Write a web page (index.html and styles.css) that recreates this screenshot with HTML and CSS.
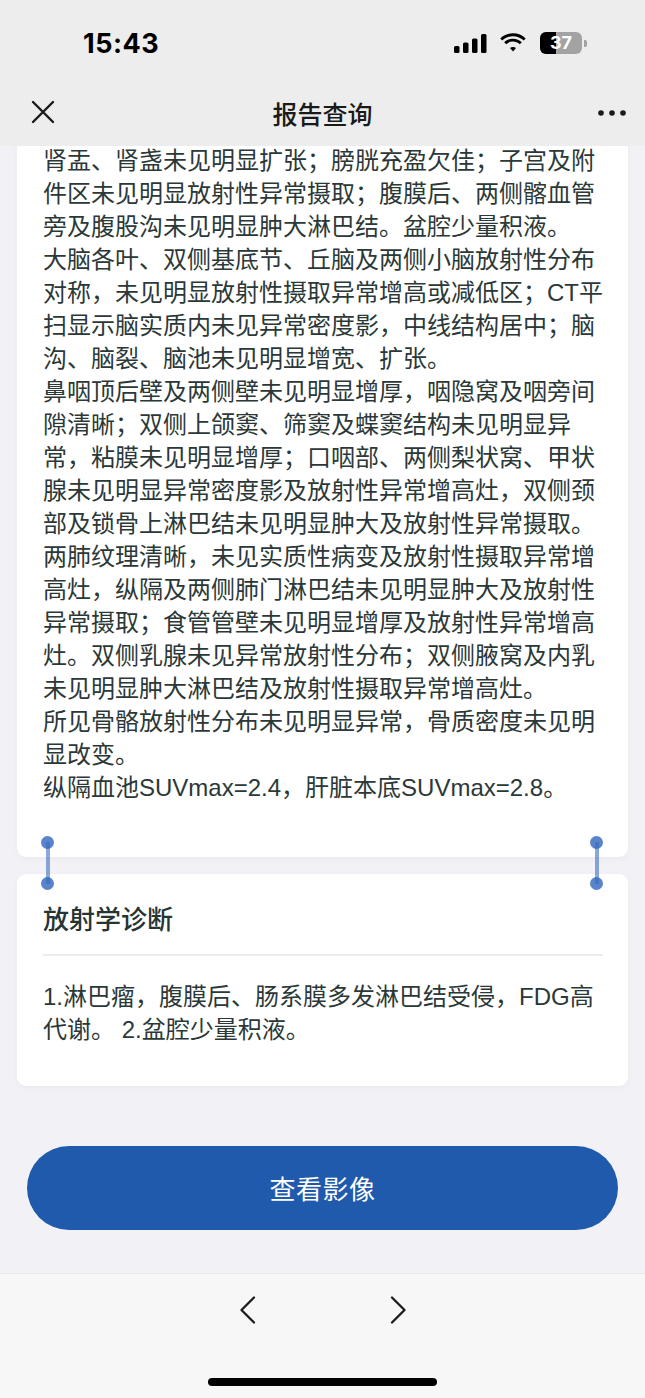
FILE: index.html
```html
<!DOCTYPE html>
<html lang="zh-CN">
<head>
<meta charset="utf-8">
<title>报告查询</title>
<link rel="stylesheet" href="styles.css">
</head>
<body>
<div class="phone">
  <header class="top">
    <div class="status">
      <span class="time">15:43</span>
      <div class="status-icons">
        <svg class="signal" width="34" height="20" viewBox="0 0 34 20">
          <rect x="0" y="12" width="5.5" height="7" rx="1.5"/>
          <rect x="9" y="8.5" width="5.5" height="10.5" rx="1.5"/>
          <rect x="18" y="4.5" width="5.5" height="14.5" rx="1.5"/>
          <rect x="27" y="0" width="5.5" height="19" rx="1.5"/>
        </svg>
        <svg class="wifi" width="26" height="20" viewBox="0 0 26 20">
          <path d="M13 3.2c4.1 0 7.9 1.6 10.7 4.3l2-2.1C22.4 2.2 17.9 0.3 13 0.3S3.6 2.2 0.3 5.4l2 2.1C5.1 4.8 8.9 3.2 13 3.2z"/>
          <path d="M13 8.6c2.6 0 5 1 6.8 2.7l2-2.1C19.5 7 16.4 5.7 13 5.7S6.5 7 4.2 9.2l2 2.1C8 9.6 10.4 8.6 13 8.6z"/>
          <path d="M13 13.9c1.2 0 2.2 0.4 3 1.2l-3 3.3-3-3.3c0.8-0.8 1.8-1.2 3-1.2z"/>
        </svg>
        <div class="battery">
          <div class="batt-body"><span class="batt-fill"></span><span class="batt-num">37</span></div>
          <span class="batt-cap"></span>
        </div>
      </div>
    </div>
    <div class="navbar">
      <svg class="nav-close" width="24" height="24" viewBox="0 0 24 24">
        <path d="M2 2L22 22M22 2L2 22" stroke="#1a1a1a" stroke-width="2.4" fill="none" stroke-linecap="round"/>
      </svg>
      <h1 class="nav-title">报告查询</h1>
      <svg class="nav-more" width="30" height="8" viewBox="0 0 30 8">
        <circle cx="4" cy="4" r="2.8"/><circle cx="15" cy="4" r="2.8"/><circle cx="26" cy="4" r="2.8"/>
      </svg>
    </div>
  </header>

  <main class="content">
    <section class="card card-findings">
      <p>肾盂、肾盏未见明显扩张；膀胱充盈欠佳；子宫及附件区未见明显放射性异常摄取；腹膜后、两侧髂血管旁及腹股沟未见明显肿大淋巴结。盆腔少量积液。</p>
      <p>大脑各叶、双侧基底节、丘脑及两侧小脑放射性分布对称，未见明显放射性摄取异常增高或减低区；CT平扫显示脑实质内未见异常密度影，中线结构居中；脑沟、脑裂、脑池未见明显增宽、扩张。</p>
      <p>鼻咽顶后壁及两侧壁未见明显增厚，咽隐窝及咽旁间隙清晰；双侧上颌窦、筛窦及蝶窦结构未见明显异常，粘膜未见明显增厚；口咽部、两侧梨状窝、甲状腺未见明显异常密度影及放射性异常增高灶，双侧颈部及锁骨上淋巴结未见明显肿大及放射性异常摄取。</p>
      <p>两肺纹理清晰，未见实质性病变及放射性摄取异常增高灶，纵隔及两侧肺门淋巴结未见明显肿大及放射性异常摄取；食管管壁未见明显增厚及放射性异常增高灶。双侧乳腺未见异常放射性分布；双侧腋窝及内乳未见明显肿大淋巴结及放射性摄取异常增高灶。</p>
      <p>所见骨骼放射性分布未见明显异常，骨质密度未见明显改变。</p>
      <p>纵隔血池SUVmax=2.4，肝脏本底SUVmax=2.8。</p>
    </section>

    <section class="card card-diagnosis">
      <h2 class="card-title">放射学诊断</h2>
      <p class="diag-text">1.淋巴瘤，腹膜后、肠系膜多发淋巴结受侵，FDG高代谢。 2.盆腔少量积液。</p>
    </section>

    <div class="action">
      <button class="btn-primary">查看影像</button>
    </div>

    <span class="sel-handle sel-left"></span>
    <span class="sel-handle sel-right"></span>
  </main>

  <footer class="toolbar">
    <div class="toolbar-nav">
      <svg width="18" height="28" viewBox="0 0 18 28"><path d="M15 1.5L2.5 14L15 26.5" stroke="#1c1c1c" stroke-width="2.3" fill="none" stroke-linecap="round" stroke-linejoin="round"/></svg>
      <svg width="18" height="28" viewBox="0 0 18 28"><path d="M3 1.5L15.5 14L3 26.5" stroke="#1c1c1c" stroke-width="2.3" fill="none" stroke-linecap="round" stroke-linejoin="round"/></svg>
    </div>
    <div class="home-indicator"></div>
  </footer>
</div>
</body>
</html>
```

FILE: styles.css
```css
* { box-sizing: border-box; }

html, body {
  margin: 0;
  padding: 0;
}

body {
  font-family: "Liberation Sans", "Noto Sans CJK SC", sans-serif;
  color: #2b3838;
  background: #f2f2f6;
}

.phone {
  width: 645px;
  height: 1398px;
  display: flex;
  flex-direction: column;
  overflow: hidden;
}

/* ---------- header ---------- */
.top {
  background: #ededed;
  flex: 0 0 146px;
  display: flex;
  flex-direction: column;
  position: relative;
  z-index: 2;
}

.status {
  height: 80px;
  display: flex;
  align-items: center;
  justify-content: space-between;
  padding: 6px 58px 0 83px;
}

.time {
  font-family: "Inter", "Liberation Sans", sans-serif;
  font-weight: 700;
  font-size: 27px;
  letter-spacing: 0.5px;
  color: #000;
}

.status-icons {
  display: flex;
  align-items: center;
  gap: 12px;
}

.signal, .wifi { fill: #000; }
.signal { margin-top: 1px; }

.battery {
  display: flex;
  align-items: center;
  gap: 2px;
  margin-left: 2px;
}

.batt-body {
  position: relative;
  width: 42px;
  height: 22px;
  border-radius: 6px;
  background: #a3a3a3;
  overflow: hidden;
}

.batt-fill {
  position: absolute;
  left: 0; top: 0; bottom: 0;
  width: 37%;
  background: #000;
}

.batt-num {
  position: relative;
  display: block;
  text-align: center;
  font-family: "Inter", "Liberation Sans", sans-serif;
  font-weight: 700;
  font-size: 18px;
  line-height: 22px;
  color: #fff;
}

.batt-cap {
  width: 3px;
  height: 7px;
  border-radius: 0 2px 2px 0;
  background: #a3a3a3;
}

.navbar {
  flex: 1;
  display: flex;
  align-items: center;
  justify-content: space-between;
  padding: 0 16px 0 31px;
  position: relative;
}

.nav-close { display: block; margin-top: -2px; }

.nav-title {
  position: absolute;
  left: 0; right: 0;
  margin: 0;
  text-align: center;
  font-family: "Noto Sans CJK SC", sans-serif;
  font-size: 25px;
  font-weight: 500;
  color: #1a1a1a;
  pointer-events: none;
}

.nav-more { fill: #1a1a1a; margin-right: 2px; }

/* ---------- content ---------- */
.content {
  flex: 1;
  position: relative;
  overflow: hidden;
  background: #f2f2f6;
  padding: 0 17px;
}

.card {
  background: #fff;
  border-radius: 9px;
  box-shadow: 0 2px 6px rgba(0, 0, 0, 0.035);
}

.card p {
  margin: 0;
  font-size: 24px;
  line-height: 33px;
}

.card-findings {
  border-radius: 0 0 9px 9px;
  margin-top: -2px;
  padding: 0 24px 53px 26px;
}

.card-diagnosis {
  margin-top: 17px;
  padding: 27px 24px 40px 26px;
}

.card-title {
  margin: 0;
  font-family: "Noto Sans CJK SC", sans-serif;
  font-size: 26px;
  line-height: 34px;
  font-weight: 500;
  color: #263434;
  padding-bottom: 19px;
  border-bottom: 2px solid #ececec;
  margin-right: 1px;
}

.diag-text {
  padding-top: 24px;
}

.action {
  padding: 60px 10px 0;
}

.btn-primary {
  display: block;
  width: 100%;
  height: 84px;
  border: none;
  border-radius: 42px;
  background: #1f5aad;
  color: #fff;
  font-family: "Noto Sans CJK SC", sans-serif;
  font-size: 26px;
  letter-spacing: 0.5px;
  padding-bottom: 3px;
}

/* text selection handles (overlay) */
.sel-handle {
  position: absolute;
  top: 690px;
  width: 13px;
  height: 55px;
}
.sel-handle::before {
  content: "";
  position: absolute;
  left: 4.5px;
  top: 6px;
  width: 4px;
  height: 42px;
  background: rgba(59, 112, 196, 0.6);
}
.sel-handle::after {
  content: "";
  position: absolute;
  left: 0;
  top: 0;
  width: 13px;
  height: 13px;
  border-radius: 50%;
  background: rgba(52, 105, 192, 0.82);
  box-shadow: 0 41px 0 rgba(52, 105, 192, 0.82);
}
.sel-left { left: 41px; }
.sel-right { left: 590px; }

/* ---------- bottom toolbar ---------- */
.toolbar {
  flex: 0 0 125px;
  background: #f7f7f7;
  border-top: 1px solid #e8e8e8;
  display: flex;
  flex-direction: column;
  align-items: center;
}

.toolbar-nav {
  display: flex;
  gap: 132px;
  margin-top: 22px;
}
.toolbar-nav svg { display: block; }

.home-indicator {
  margin-top: 54px;
  width: 229px;
  height: 8px;
  border-radius: 4px;
  background: #000;
}
```
